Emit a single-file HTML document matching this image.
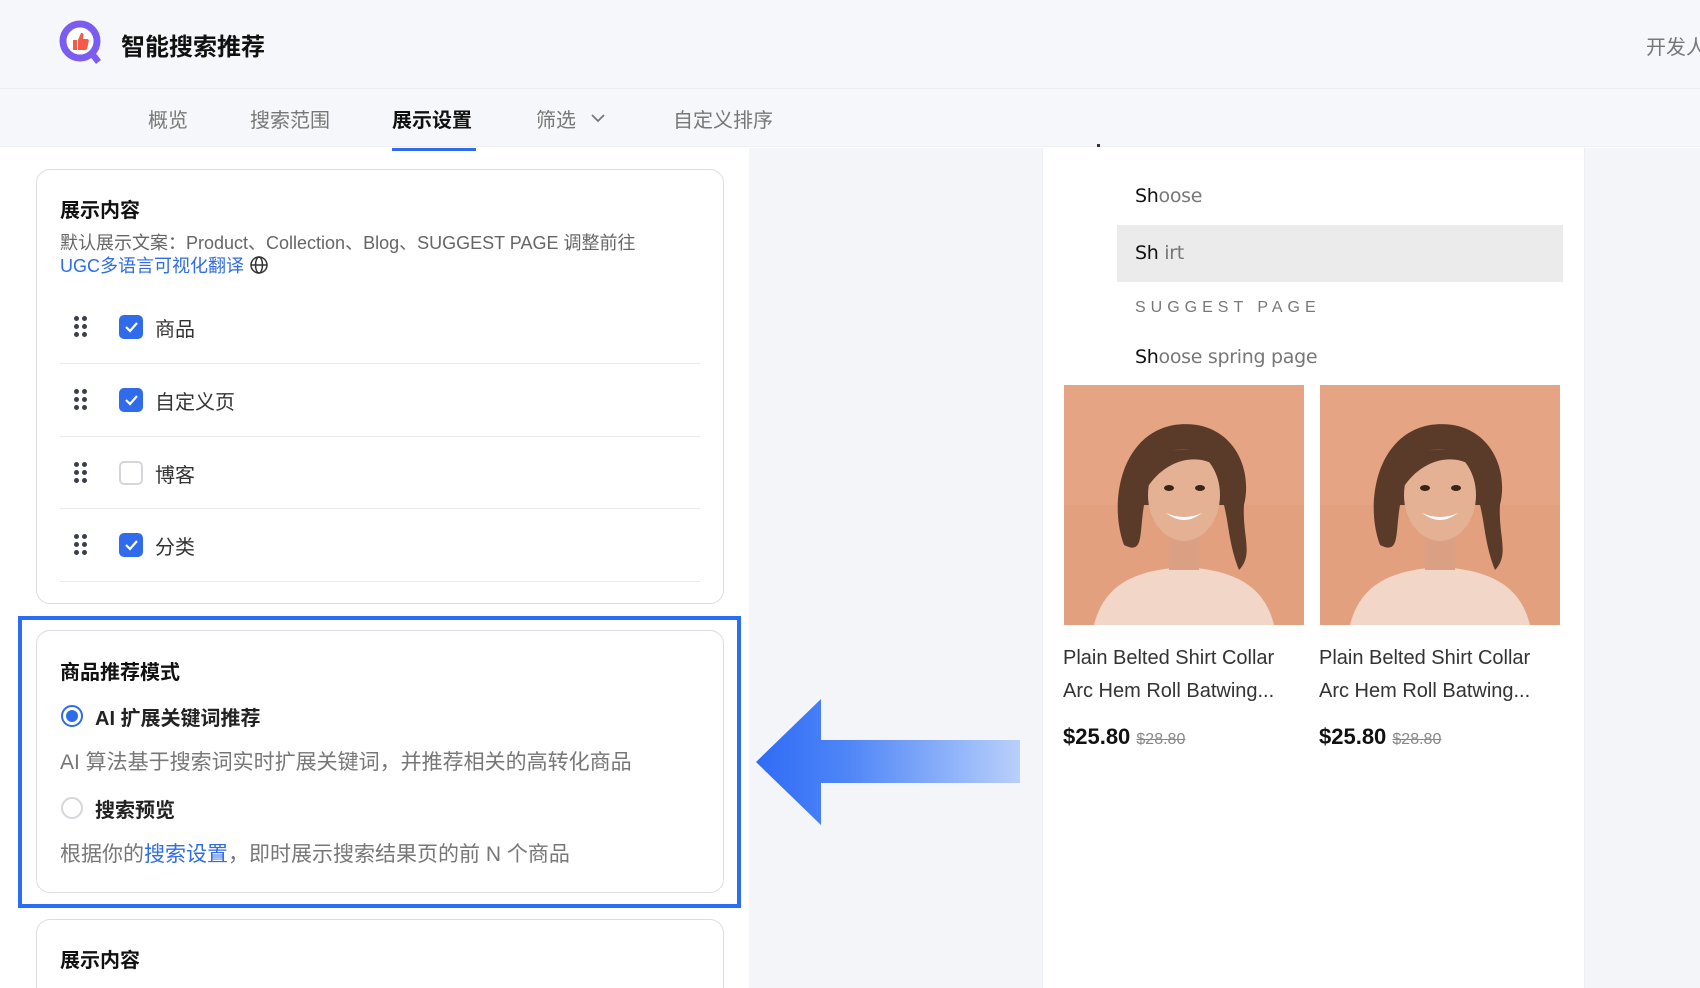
<!DOCTYPE html>
<html style="width:1700px;height:988px;overflow:hidden"><head><meta charset="utf-8">
<style>
*{margin:0;padding:0;box-sizing:border-box}
body{width:1700px;height:988px;overflow:hidden;position:relative;background:#fff;font-family:"Liberation Sans","Noto Sans CJK SC",sans-serif;color:#222}
.a{position:absolute;white-space:nowrap}
.hdr{left:0;top:0;width:1700px;height:89px;background:#f6f7fa;border-bottom:1px solid #eceef2}
.nav{left:0;top:89px;width:1700px;height:58px;background:#f6f7fa;border-bottom:1px solid #eceef2}
.nv{font-size:20px;color:#777;top:104px}
.card{position:absolute;left:36px;width:688px;border:1px solid #dcdde2;border-radius:14px;background:#fff}
.cb{position:absolute;left:119px;width:24px;height:24px;border-radius:5px;background:#2f6bea}
.cb svg{position:absolute;left:4px;top:5px}
.cbo{position:absolute;left:119px;width:24px;height:24px;border-radius:5px;border:2px solid #d5d6da;background:#fff}
.drag{position:absolute;left:74px;width:12px;height:22px}
.drag i{position:absolute;width:5px;height:5px;border-radius:50%;background:#3b3f4a}
.sep{position:absolute;left:60px;width:640px;height:1px;background:#e8e9ec}
.lbl{font-size:20px;color:#333}
.pv{font-size:19px;color:#777;font-family:"DejaVu Sans","Liberation Sans",sans-serif;letter-spacing:-.3px}
.pv b{color:#111;font-weight:normal}
</style></head><body>
<div class="a hdr"></div>
<div class="a nav"></div>
<svg class="a" style="left:58px;top:19px" width="50" height="50" viewBox="0 0 50 50">
<circle cx="22" cy="22" r="17" fill="none" stroke="#7b5cf0" stroke-width="7"/>
<path d="M31 36 L38 45 L43 41 L36 32Z" fill="#7b5cf0"/>
<circle cx="22" cy="22" r="13.5" fill="#fff"/>
<path d="M15 21h4v10h-4z M20 21 l3-7 c2 0 3 1 2.5 3 l-0.5 3 h4 c1.5 0 2 1 1.8 2 l-1.5 7 c-0.3 1-1 2-2 2h-7.3z" fill="#f25a4a"/>
</svg>
<div class="a" style="left:121px;top:27px;font-size:24px;font-weight:bold;color:#111">智能搜索推荐</div>
<div class="a" style="left:1646px;top:31px;font-size:20px;color:#777">开发人</div>
<div class="a nv" style="left:148px">概览</div>
<div class="a nv" style="left:250px">搜索范围</div>
<div class="a nv" style="left:392px;color:#111;font-weight:bold">展示设置</div>
<div class="a" style="left:392px;top:148px;width:84px;height:3px;background:#2f6bea"></div>
<div class="a nv" style="left:536px">筛选</div>
<svg class="a" style="left:590px;top:112px" width="16" height="12"><path d="M2 3l6 6 6-6" fill="none" stroke="#777" stroke-width="1.8"/></svg>
<div class="a nv" style="left:673px">自定义排序</div>

<div class="a" style="left:749px;top:148px;width:951px;height:840px;background:#f4f5f8"></div>
<div class="a" style="left:1042px;top:148px;width:543px;height:840px;background:#fff;border-left:1px solid #eceef2;border-right:1px solid #eceef2"></div>

<div class="card" style="top:169px;height:435px"></div>
<div class="a" style="left:60px;top:194px;font-size:20px;font-weight:bold;color:#111">展示内容</div>
<div class="a" style="left:60px;top:229px;font-size:18px;color:#666">默认展示文案：Product、Collection、Blog、SUGGEST PAGE 调整前往</div>
<div class="a" style="left:60px;top:252px;font-size:18px;color:#2f6bea">UGC多语言可视化翻译 <svg style="vertical-align:-3px" width="20" height="20" viewBox="0 0 20 20"><circle cx="10" cy="10" r="8" fill="none" stroke="#333" stroke-width="1.5"/><ellipse cx="10" cy="10" rx="3.5" ry="8" fill="none" stroke="#333" stroke-width="1.5"/><path d="M2 10h16" stroke="#333" stroke-width="1.5"/></svg></div>

<div class="drag" style="top:316px"><i style="left:0;top:0"></i><i style="left:8px;top:0"></i><i style="left:0;top:8px"></i><i style="left:8px;top:8px"></i><i style="left:0;top:16px"></i><i style="left:8px;top:16px"></i></div>
<div class="cb" style="top:315px"><svg width="16" height="14"><path d="M3 7l4 4 7-8" fill="none" stroke="#fff" stroke-width="2.2"/></svg></div>
<div class="a lbl" style="left:155px;top:313px">商品</div>
<div class="sep" style="top:363px"></div>
<div class="drag" style="top:389px"><i style="left:0;top:0"></i><i style="left:8px;top:0"></i><i style="left:0;top:8px"></i><i style="left:8px;top:8px"></i><i style="left:0;top:16px"></i><i style="left:8px;top:16px"></i></div>
<div class="cb" style="top:388px"><svg width="16" height="14"><path d="M3 7l4 4 7-8" fill="none" stroke="#fff" stroke-width="2.2"/></svg></div>
<div class="a lbl" style="left:155px;top:386px">自定义页</div>
<div class="sep" style="top:436px"></div>
<div class="drag" style="top:462px"><i style="left:0;top:0"></i><i style="left:8px;top:0"></i><i style="left:0;top:8px"></i><i style="left:8px;top:8px"></i><i style="left:0;top:16px"></i><i style="left:8px;top:16px"></i></div>
<div class="cbo" style="top:461px"></div>
<div class="a lbl" style="left:155px;top:459px">博客</div>
<div class="sep" style="top:508px"></div>
<div class="drag" style="top:534px"><i style="left:0;top:0"></i><i style="left:8px;top:0"></i><i style="left:0;top:8px"></i><i style="left:8px;top:8px"></i><i style="left:0;top:16px"></i><i style="left:8px;top:16px"></i></div>
<div class="cb" style="top:533px"><svg width="16" height="14"><path d="M3 7l4 4 7-8" fill="none" stroke="#fff" stroke-width="2.2"/></svg></div>
<div class="a lbl" style="left:155px;top:531px">分类</div>
<div class="sep" style="top:581px"></div>

<div class="a" style="left:18px;top:616px;width:723px;height:292px;border:4px solid #2b6ef6"></div>
<div class="card" style="top:630px;height:263px"></div>
<div class="a" style="left:60px;top:656px;font-size:20px;font-weight:bold;color:#111">商品推荐模式</div>
<div class="a" style="left:61px;top:705px;width:22px;height:22px;border-radius:50%;border:2px solid #2f6bea"><div style="position:absolute;left:3px;top:3px;width:12px;height:12px;border-radius:50%;background:#2f6bea"></div></div>
<div class="a" style="left:95px;top:702px;font-size:20px;font-weight:bold;color:#222">AI 扩展关键词推荐</div>
<div class="a" style="left:60px;top:746px;font-size:21px;color:#777">AI 算法基于搜索词实时扩展关键词，并推荐相关的高转化商品</div>
<div class="a" style="left:61px;top:797px;width:22px;height:22px;border-radius:50%;border:2px solid #d5d6da"></div>
<div class="a" style="left:95px;top:794px;font-size:20px;font-weight:bold;color:#222">搜索预览</div>
<div class="a" style="left:60px;top:838px;font-size:21px;color:#777">根据你的<span style="color:#2f6bea">搜索设置</span>，即时展示搜索结果页的前 N 个商品</div>

<div class="card" style="top:919px;height:69px;border-bottom:0;border-radius:14px 14px 0 0"></div>
<div class="a" style="left:60px;top:944px;font-size:20px;font-weight:bold;color:#111">展示内容</div>

<svg class="a" style="left:750px;top:695px" width="275" height="135">
<defs><linearGradient id="g" x1="0" x2="1"><stop offset="0" stop-color="#2f6bf6"/><stop offset=".35" stop-color="#4f86f7"/><stop offset="1" stop-color="#b9d0fb"/></linearGradient></defs>
<path d="M6 67 L71 4 L71 45 L270 45 L270 88 L71 88 L71 130 Z" fill="url(#g)"/>
</svg>

<div class="a" style="left:1097px;top:144px;width:3px;height:3px;background:#333"></div>
<div class="a pv" style="left:1135px;top:185px"><b>Sh</b>oose</div>
<div class="a" style="left:1117px;top:225px;width:446px;height:57px;background:#ebebeb"></div>
<div class="a pv" style="left:1135px;top:242px"><b>Sh</b> irt</div>
<div class="a" style="left:1135px;top:299px;font-size:16px;color:#777;letter-spacing:5px">SUGGEST PAGE</div>
<div class="a pv" style="left:1135px;top:346px"><b>Sh</b>oose spring page</div>

<svg class="a" style="left:1064px;top:385px" width="240" height="240" viewBox="0 0 240 240">
<rect width="240" height="240" fill="#e3a07f"/>
<path d="M0 0h240v120H0z" fill="#e7a98a" opacity=".5"/>
<path d="M30 240 C40 200 70 185 120 182 C170 185 200 200 210 240Z" fill="#f2d6c8"/>
<rect x="105" y="140" width="30" height="45" fill="#d9a084"/>
<path d="M60 160 C45 120 55 50 110 40 C165 32 190 80 180 120 C178 150 190 170 175 185 C165 160 165 140 160 120 L80 120 C75 150 80 170 60 160Z" fill="#5a3a28"/>
<ellipse cx="120" cy="110" rx="36" ry="46" fill="#e4b195"/>
<path d="M82 95 C90 60 140 50 160 90 C150 70 110 65 85 100Z" fill="#5a3a28"/>
<path d="M102 128 q18 14 36 0 q-18 8 -36 0z" fill="#fff"/>
<ellipse cx="105" cy="103" rx="5" ry="3" fill="#3a2418"/><ellipse cx="136" cy="103" rx="5" ry="3" fill="#3a2418"/>
</svg>
<svg class="a" style="left:1319px;top:385px" width="242" height="240" viewBox="0 0 240 240">
<rect width="240" height="240" fill="#e3a07f"/>
<path d="M0 0h240v120H0z" fill="#e7a98a" opacity=".5"/>
<path d="M30 240 C40 200 70 185 120 182 C170 185 200 200 210 240Z" fill="#f2d6c8"/>
<rect x="105" y="140" width="30" height="45" fill="#d9a084"/>
<path d="M60 160 C45 120 55 50 110 40 C165 32 190 80 180 120 C178 150 190 170 175 185 C165 160 165 140 160 120 L80 120 C75 150 80 170 60 160Z" fill="#5a3a28"/>
<ellipse cx="120" cy="110" rx="36" ry="46" fill="#e4b195"/>
<path d="M82 95 C90 60 140 50 160 90 C150 70 110 65 85 100Z" fill="#5a3a28"/>
<path d="M102 128 q18 14 36 0 q-18 8 -36 0z" fill="#fff"/>
<ellipse cx="105" cy="103" rx="5" ry="3" fill="#3a2418"/><ellipse cx="136" cy="103" rx="5" ry="3" fill="#3a2418"/>
</svg>

<div class="a" style="left:1063px;top:642px;font-size:20px;color:#333;line-height:33px">Plain Belted Shirt Collar<br>Arc Hem Roll Batwing...</div>
<div class="a" style="left:1319px;top:642px;font-size:20px;color:#333;line-height:33px">Plain Belted Shirt Collar<br>Arc Hem Roll Batwing...</div>
<div class="a" style="left:1063px;top:724px;font-size:22px;font-weight:bold;color:#111">$25.80 <span style="font-size:16px;font-weight:normal;color:#888;text-decoration:line-through">$28.80</span></div>
<div class="a" style="left:1319px;top:724px;font-size:22px;font-weight:bold;color:#111">$25.80 <span style="font-size:16px;font-weight:normal;color:#888;text-decoration:line-through">$28.80</span></div>
</body></html>
